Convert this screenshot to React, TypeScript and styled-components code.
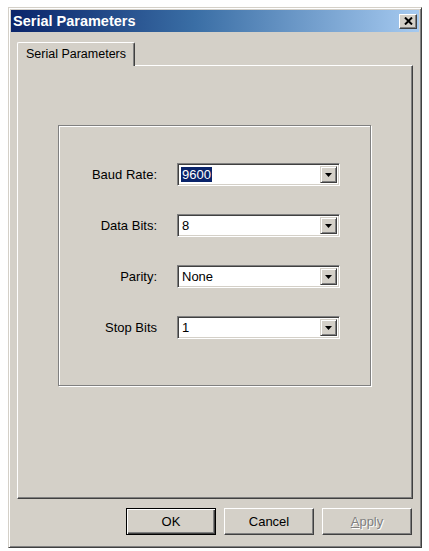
import React from 'react';
import styled, { createGlobalStyle } from 'styled-components';

const FACE = '#d4d0c8';
const SHADOW = '#808080';
const DARK = '#404040';

const GlobalStyle = createGlobalStyle`
  html, body {
    margin: 0;
    padding: 0;
    background: #ffffff;
  }
  body {
    font-family: "Liberation Sans", Arial, sans-serif;
    font-size: 13px;
    color: #000;
  }
`;

const Window = styled.div`
  box-sizing: border-box;
  margin: 7px 0 0 8px;
  width: 414px;
  height: 541px;
  background: ${FACE};
  border: 1px solid;
  border-color: ${FACE} ${DARK} ${DARK} ${FACE};
  box-shadow: inset 1px 1px 0 #fff, inset -1px -1px 0 ${SHADOW};
  padding: 2px;
  display: flex;
  flex-direction: column;
`;

const TitleBar = styled.div`
  height: 22px;
  flex: 0 0 22px;
  display: flex;
  align-items: center;
  justify-content: space-between;
  padding: 0 2px 0 2px;
  background: linear-gradient(90deg, #0a246a 0%, #3a6ea5 45%, #a6caf0 100%);
`;

const Title = styled.span`
  color: #fff;
  font-weight: bold;
  font-size: 14.5px;
  letter-spacing: 0;
`;

const CloseButton = styled.button`
  box-sizing: border-box;
  width: 18px;
  height: 15px;
  padding: 0;
  background: ${FACE};
  border: 1px solid;
  border-color: #fff ${DARK} ${DARK} #fff;
  box-shadow: inset -1px -1px 0 ${SHADOW};
  display: flex;
  align-items: center;
  justify-content: center;
`;

const Content = styled.div`
  padding: 10px 6px 0 6px;
  display: flex;
  flex-direction: column;
`;

const TabStrip = styled.div`
  display: flex;
  height: 23px;
`;

const Tab = styled.div`
  box-sizing: border-box;
  position: relative;
  z-index: 1;
  width: 118px;
  height: 24px;
  margin-bottom: -1px;
  padding-top: 4px;
  text-align: center;
  font-size: 12.5px;
  background: ${FACE};
  border-top: 1px solid #fff;
  border-left: 1px solid #fff;
  border-right: 1px solid ${DARK};
  border-radius: 2px 2px 0 0;
  box-shadow: inset -1px 0 0 ${SHADOW};
`;

const TabPanel = styled.div`
  box-sizing: border-box;
  height: 434px;
  border: 1px solid;
  border-color: #fff ${DARK} ${DARK} #fff;
  box-shadow: inset -1px -1px 0 ${SHADOW};
  padding: 59px 0 0 40px;
`;

const GroupBox = styled.div`
  box-sizing: border-box;
  width: 313px;
  height: 261px;
  border: 1px solid ${SHADOW};
  box-shadow: inset 1px 1px 0 #fff, 1px 1px 0 #fff;
  padding: 37px 0 0 0;
  display: grid;
  grid-template-columns: 98px 163px;
  grid-auto-rows: 23px;
  column-gap: 20px;
  row-gap: 28px;
  align-content: start;
`;

const Label = styled.label`
  align-self: center;
  text-align: right;
  font-size: 13px;
`;

const Combo = styled.div`
  box-sizing: border-box;
  height: 23px;
  background: #fff;
  border: 1px solid;
  border-color: ${SHADOW} #fff #fff ${SHADOW};
  box-shadow: inset 1px 1px 0 ${DARK}, inset -1px -1px 0 ${FACE};
  padding: 2px 2px 2px 2px;
  display: flex;
  align-items: center;
`;

const ComboText = styled.span<{ $selected?: boolean }>`
  flex: 1;
  padding-left: 1px;
  font-size: 13px;
  line-height: 17px;
  span {
    padding: 0 1px;
    background: ${(p) => (p.$selected ? '#0a246a' : 'transparent')};
    color: ${(p) => (p.$selected ? '#fff' : '#000')};
  }
`;

const DropButton = styled.div`
  box-sizing: border-box;
  width: 17px;
  height: 17px;
  background: ${FACE};
  border: 1px solid;
  border-color: ${FACE} ${DARK} ${DARK} ${FACE};
  box-shadow: inset 1px 1px 0 #fff, inset -1px -1px 0 ${SHADOW};
  display: flex;
  align-items: center;
  justify-content: center;
`;

const ButtonRow = styled.div`
  display: flex;
  justify-content: flex-end;
  gap: 8px;
  padding: 9px 1px 0 0;
`;

const PushButton = styled.button<{ $default?: boolean }>`
  box-sizing: border-box;
  width: 90px;
  height: 27px;
  padding: 0;
  font-family: "Liberation Sans", Arial, sans-serif;
  font-size: 13px;
  color: #000;
  background: ${FACE};
  border: 1px solid;
  border-color: ${(p) => (p.$default ? '#000' : `#fff ${DARK} ${DARK} #fff`)};
  box-shadow: ${(p) =>
    p.$default
      ? `inset 1px 1px 0 #fff, inset -1px -1px 0 ${DARK}, inset -2px -2px 0 ${SHADOW}`
      : `inset -1px -1px 0 ${SHADOW}`};

  &:disabled {
    color: ${SHADOW};
    text-shadow: 1px 1px 0 #fff;
  }
`;

const Arrow = () => (
  <svg width="7" height="4" viewBox="0 0 7 4">
    <path d="M0 0h7L3.5 4z" fill="#000" />
  </svg>
);

const CloseGlyph = () => (
  <svg width="9" height="8" viewBox="0 0 9 8">
    <path d="M1 0.5l7 7M8 0.5l-7 7" stroke="#000" strokeWidth="2" />
  </svg>
);

const FIELDS = [
  { label: 'Baud Rate:', value: '9600', selected: true },
  { label: 'Data Bits:', value: '8' },
  { label: 'Parity:', value: 'None' },
  { label: 'Stop Bits', value: '1' },
];

export default function App() {
  return (
    <>
      <GlobalStyle />
      <Window>
        <TitleBar>
          <Title>Serial Parameters</Title>
          <CloseButton aria-label="Close">
            <CloseGlyph />
          </CloseButton>
        </TitleBar>
        <Content>
          <TabStrip>
            <Tab>Serial Parameters</Tab>
          </TabStrip>
          <TabPanel>
            <GroupBox>
              {FIELDS.map((f) => (
                <React.Fragment key={f.label}>
                  <Label>{f.label}</Label>
                  <Combo>
                    <ComboText $selected={f.selected}>
                      <span>{f.value}</span>
                    </ComboText>
                    <DropButton>
                      <Arrow />
                    </DropButton>
                  </Combo>
                </React.Fragment>
              ))}
            </GroupBox>
          </TabPanel>
          <ButtonRow>
            <PushButton $default>OK</PushButton>
            <PushButton>Cancel</PushButton>
            <PushButton disabled>
              <u>A</u>pply
            </PushButton>
          </ButtonRow>
        </Content>
      </Window>
    </>
  );
}
